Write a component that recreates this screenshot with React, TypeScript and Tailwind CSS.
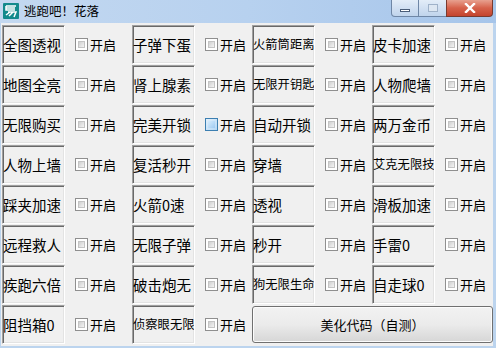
const rows: string[][] = [
  ["全图透视", "子弹下蛋", "火箭筒距离", "皮卡加速"],
  ["地图全亮", "肾上腺素", "无限开钥匙", "人物爬墙"],
  ["无限购买", "完美开锁", "自动开锁", "两万金币"],
  ["人物上墙", "复活秒开", "穿墙", "艾克无限技"],
  ["踩夹加速", "火箭0速", "透视", "滑板加速"],
  ["远程救人", "无限子弹", "秒开", "手雷0"],
  ["疾跑六倍", "破击炮无", "狗无限生命", "自走球0"],
  ["阻挡箱0", "侦察眼无限"],
];

function Check({ hover }: { hover?: boolean }) {
  return hover ? (
    <div className="w-[13px] h-[13px] border border-[#3c7fb1] bg-gradient-to-br from-[#e3f1fc] to-[#b5d8f6] p-[2px]">
      <div className="w-full h-full bg-gradient-to-br from-[#d6ecfd] to-[#9fcbf2]" />
    </div>
  ) : (
    <div className="w-[13px] h-[13px] border border-[#8f8f8f] bg-white p-[2px]">
      <div className="w-full h-full bg-gradient-to-br from-[#cfcfcf] to-[#f4f4f4] border border-[#c4c4c4]" />
    </div>
  );
}

function Cell({ label, hover }: { label: string; hover?: boolean }) {
  const small = label.length >= 5;
  return (
    <div className="flex items-center">
      <div className="w-[63px] h-[39px] flex items-center border border-t-[#a0a0a0] border-l-[#a0a0a0] border-r-white border-b-white shadow-[inset_1px_1px_0_#696969,inset_-1px_-1px_0_#e3e3e3] overflow-hidden whitespace-nowrap">
        <span className={small ? "text-[12.3px]" : "text-[14.5px]"}>{label}</span>
      </div>
      <div className="ml-[10px]">
        <Check hover={hover} />
      </div>
      <span className="ml-[2px] text-[13px]">开启</span>
    </div>
  );
}

export default function App() {
  return (
    <div
      className="w-[496px] h-[348px] flex flex-col bg-[#bcd4ee] text-black overflow-hidden"
      style={{ fontFamily: '"Noto Sans CJK SC", "Noto Sans", sans-serif' }}
    >
      <div className="h-[23px] flex items-start bg-gradient-to-r from-[#c3d8f0] via-[#b7d1ef] to-[#a6c5ea]">
        <svg width="16" height="16" viewBox="0 0 16 16" className="ml-[3px] mt-[3px]">
          <rect x="0" y="0" width="16" height="16" rx="1" fill="#138a8c" />
          <path d="M3 3h10M3 3v4h9M3 5h9M5 9h8l-2 5M3 12l4-3M6 13l4-4" stroke="#fff" strokeWidth="1.5" fill="none" />
        </svg>
        <span className="ml-[5px] mt-[2px] text-[12.5px] leading-[18px]">逃跑吧！花落</span>
        <div className="ml-auto mr-[3px] flex">
          <div className="w-[28px] h-[17px] rounded-bl-[4px] border border-t-0 border-[#6f87a6] bg-gradient-to-b from-[#e3edf8] to-[#c0d4ec] flex items-center justify-center">
            <div className="w-[10px] h-[3px] mt-[4px] bg-white border border-[#4a5d78]" />
          </div>
          <div className="w-[27px] h-[17px] border-b border-[#6f87a6] bg-gradient-to-b from-[#e3edf8] to-[#c0d4ec] flex items-center justify-center">
            <div className="w-[10px] h-[8px] border border-[#9fb2c9] bg-[#dde7f2]" />
          </div>
          <div className="w-[47px] h-[17px] rounded-br-[4px] border border-t-0 border-[#7a3a2e] bg-gradient-to-b from-[#e7a08f] via-[#d6614a] to-[#c4442e] flex items-center justify-center">
            <svg width="12" height="10" viewBox="0 0 12 10">
              <path d="M2 1l8 8M10 1L2 9" stroke="#fff" strokeWidth="2.4" strokeLinecap="square" />
            </svg>
          </div>
        </div>
      </div>
      <div className="flex-1 ml-[1px] mr-[3px] mb-[2px] bg-[#f0f0f0] pt-[2px] pl-[1px]">
        <div className="grid grid-cols-[130px_120px_120px_1fr] auto-rows-[39px] gap-y-[1px]">
          {rows.map((r, i) =>
            r.map((label, j) => (
              <Cell key={i + "-" + j} label={label} hover={i === 2 && j === 1} />
            ))
          )}
          <button className="col-span-2 my-[1px] rounded-[3px] border border-[#707070] bg-gradient-to-b from-[#f2f2f2] via-[#ebebeb] to-[#d6d6d6] shadow-[inset_0_0_0_1px_#fcfcfc] text-[13px]">
            美化代码（自测）
          </button>
        </div>
      </div>
    </div>
  );
}
